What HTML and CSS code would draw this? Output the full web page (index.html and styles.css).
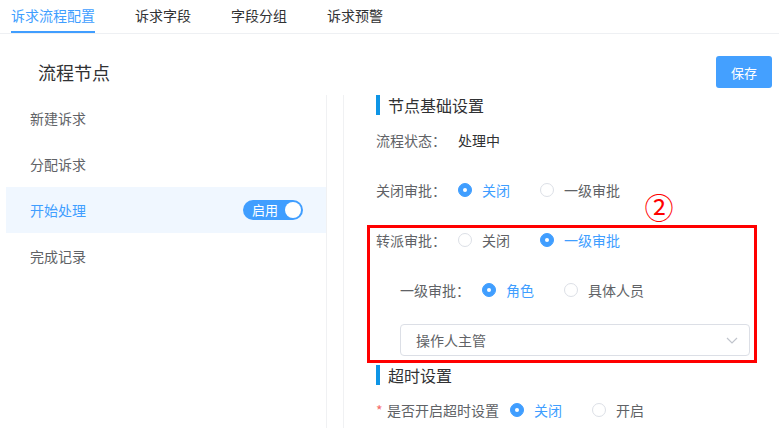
FILE: index.html
```html
<!DOCTYPE html>
<html lang="zh-CN">

<head>
    <meta charset="UTF-8">
    <meta name="viewport" content="width=device-width, initial-scale=1.0">
    <title>诉求流程配置</title>
    <link rel="stylesheet" href="styles.css">
</head>

<body>

    <div class="tabs">
        <div class="tab active">诉求流程配置</div>
        <div class="tab">诉求字段</div>
        <div class="tab">字段分组</div>
        <div class="tab">诉求预警</div>
    </div>

    <div class="page-head">
        <h2 class="page-title">流程节点</h2>
        <button class="btn-save">保存</button>
    </div>

    <div class="main">
        <ul class="node-list">
            <li>新建诉求</li>
            <li>分配诉求</li>
            <li class="on">开始处理<span class="switch">启用<i></i></span></li>
            <li>完成记录</li>
        </ul>

        <div class="setting">
            <div class="sec-title">节点基础设置</div>

            <div class="form-row">
                <span class="label">流程状态：</span>
                <span class="value">处理中</span>
            </div>

            <div class="form-row">
                <span class="label">关闭审批：</span>
                <label class="radio checked"><i></i><span>关闭</span></label>
                <label class="radio"><i></i><span>一级审批</span></label>
            </div>

            <div class="form-row">
                <span class="label">转派审批：</span>
                <label class="radio"><i></i><span>关闭</span></label>
                <label class="radio checked"><i></i><span>一级审批</span></label>
            </div>

            <div class="form-row sub">
                <span class="label">一级审批：</span>
                <label class="radio checked"><i></i><span>角色</span></label>
                <label class="radio"><i></i><span>具体人员</span></label>
            </div>

            <div class="form-row sub">
                <div class="select">
                    <span>操作人主管</span>
                    <svg width="12" height="7" viewBox="0 0 12 7"><path d="M1 1l5 5 5-5" fill="none" stroke="#c0c4cc" stroke-width="1.2"/></svg>
                </div>
            </div>

            <div class="sec-title">超时设置</div>

            <div class="form-row">
                <span class="label required">是否开启超时设置</span>
                <label class="radio checked"><i></i><span>关闭</span></label>
                <label class="radio"><i></i><span>开启</span></label>
            </div>

            <!-- 标注 -->
            <div class="mark-box"></div>
            <span class="mark-num">②</span>
        </div>
    </div>

</body>

</html>
```

FILE: styles.css
```css
/* reset START */
* {
    margin: 0;
    padding: 0;
    box-sizing: border-box;
}

html,
body {
    height: 100%;
    overflow: hidden;
}

body {
    font-family: "Noto Sans CJK SC", "Noto Sans", sans-serif;
    font-size: 14px;
    color: #606266;
    background: #ffffff;
}

ul {
    list-style: none;
}

/* reset END */

/* tabs START */
.tabs {
    display: flex;
    gap: 40px;
    padding-left: 11px;
    height: 34px;
    border-bottom: 1px solid #eef0f3;
}

.tab {
    height: 33px;
    line-height: 30px;
    color: #303133;
    border-bottom: 2px solid transparent;
}

.tab.active {
    color: #409eff;
    border-bottom-color: #409eff;
}

/* tabs END */

/* page-head START */
.page-head {
    display: flex;
    justify-content: space-between;
    align-items: center;
    padding: 18px 7px 3px 38px;
}

.page-title {
    font-size: 18px;
    font-weight: normal;
    color: #303133;
    line-height: 40px;
}

.btn-save {
    width: 56px;
    height: 32px;
    border: none;
    border-radius: 3px;
    background: #44a0ff;
    color: #ffffff;
    font-family: inherit;
    font-size: 13px;
}

/* page-head END */

/* main START */
.main {
    display: flex;
    height: 340px;
}

.node-list {
    width: 321px;
    margin-left: 6px;
    border-right: 1px solid #f0f1f3;
}

.node-list li {
    display: flex;
    justify-content: space-between;
    align-items: center;
    height: 46px;
    padding: 0 23px 0 24px;
}

.node-list li.on {
    background: #f0f7ff;
    color: #409eff;
}

.switch {
    position: relative;
    width: 60px;
    height: 20px;
    line-height: 20px;
    padding-left: 9px;
    border-radius: 10px;
    background: #409eff;
    color: #ffffff;
    font-size: 13px;
}

.switch i {
    position: absolute;
    right: 2px;
    top: 2px;
    width: 16px;
    height: 16px;
    border-radius: 50%;
    background: #ffffff;
}

/* main END */

/* setting START */
.setting {
    position: relative;
    flex: 1;
    margin-left: 16px;
    padding-left: 32px;
    border-left: 1px solid #f0f1f3;
}

.sec-title {
    height: 20px;
    line-height: 20px;
    padding-left: 8px;
    border-left: 4px solid #0e95e6;
    font-size: 16px;
    color: #303133;
}

.form-row {
    display: flex;
    align-items: center;
    height: 50px;
}

.form-row.sub {
    padding-left: 24px;
}

.label {
    margin-right: 12px;
}

.label.required {
    margin-right: 11px;
}

.label.required::before {
    content: "*";
    display: inline-block;
    width: 11px;
    color: #f56c6c;
}

.value {
    color: #303133;
}

.radio {
    display: flex;
    align-items: center;
    margin-right: 30px;
}

.radio i {
    position: relative;
    width: 14px;
    height: 14px;
    border: 1px solid #dcdfe6;
    border-radius: 50%;
    background: #ffffff;
}

.radio span {
    margin-left: 10px;
}

.radio.checked i {
    border-color: #409eff;
    background: #409eff;
}

.radio.checked i::after {
    content: "";
    position: absolute;
    left: 4px;
    top: 4px;
    width: 4px;
    height: 4px;
    border-radius: 50%;
    background: #ffffff;
}

.radio.checked span {
    color: #409eff;
}

.select {
    display: flex;
    justify-content: space-between;
    align-items: center;
    width: 350px;
    height: 32px;
    padding: 0 11px 0 15px;
    border: 1px solid #dcdfe6;
    border-radius: 4px;
}

/* setting END */

/* mark START */
.mark-box {
    position: absolute;
    left: 23px;
    top: 130px;
    width: 390px;
    height: 138px;
    border: 3px solid #ff0000;
}

.mark-num {
    position: absolute;
    left: 298px;
    top: 96px;
    width: 34px;
    line-height: 30px;
    text-align: center;
    font-size: 29px;
    color: #ff0000;
}

/* mark END */
```
